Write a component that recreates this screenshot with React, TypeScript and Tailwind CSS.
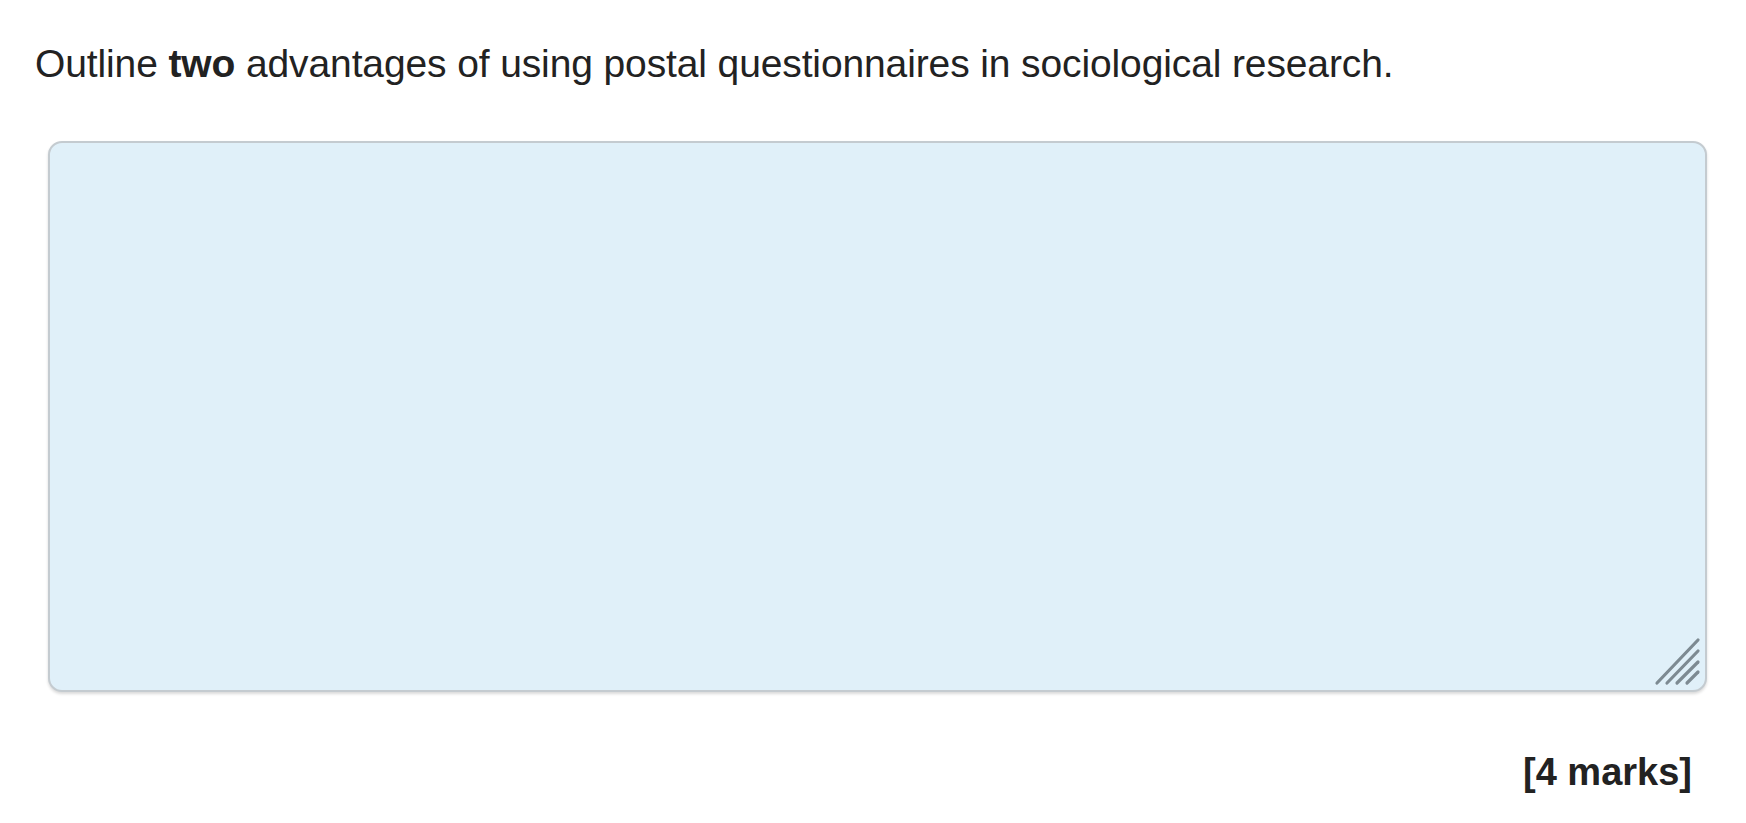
export default function App() {
  return (
    <div
      className="w-[1746px] h-[823px] bg-white text-[#222] overflow-hidden"
      style={{ fontFamily: '"Liberation Sans", Arial, sans-serif' }}
    >
      <p className="pl-[35px] pt-[40px] text-[39px] leading-[48px] tracking-[-0.12px]">
        Outline <b>two</b> advantages of using postal questionnaires in sociological research.
      </p>

      <div className="relative ml-[48px] mt-[53px] w-[1659px] h-[551px] rounded-[14px] border-2 border-[#c4cbd0] bg-[#e0f0f9] shadow-[0_2px_3px_rgba(0,0,0,0.15)]">
        <svg
          className="absolute right-[4px] bottom-[4px]"
          width="48"
          height="50"
          viewBox="0 0 48 50"
        >
          <g stroke="#7d8a92" strokeWidth="3.2" strokeLinecap="round">
            <line x1="4" y1="47" x2="45" y2="4" />
            <line x1="14" y1="47" x2="45" y2="15" />
            <line x1="24" y1="47" x2="45" y2="26" />
            <line x1="34" y1="47" x2="45" y2="36" />
          </g>
        </svg>
      </div>

      <div className="flex justify-end pr-[54px] mt-[52px]">
        <span className="text-[38px] font-bold">[4 marks]</span>
      </div>
    </div>
  );
}
